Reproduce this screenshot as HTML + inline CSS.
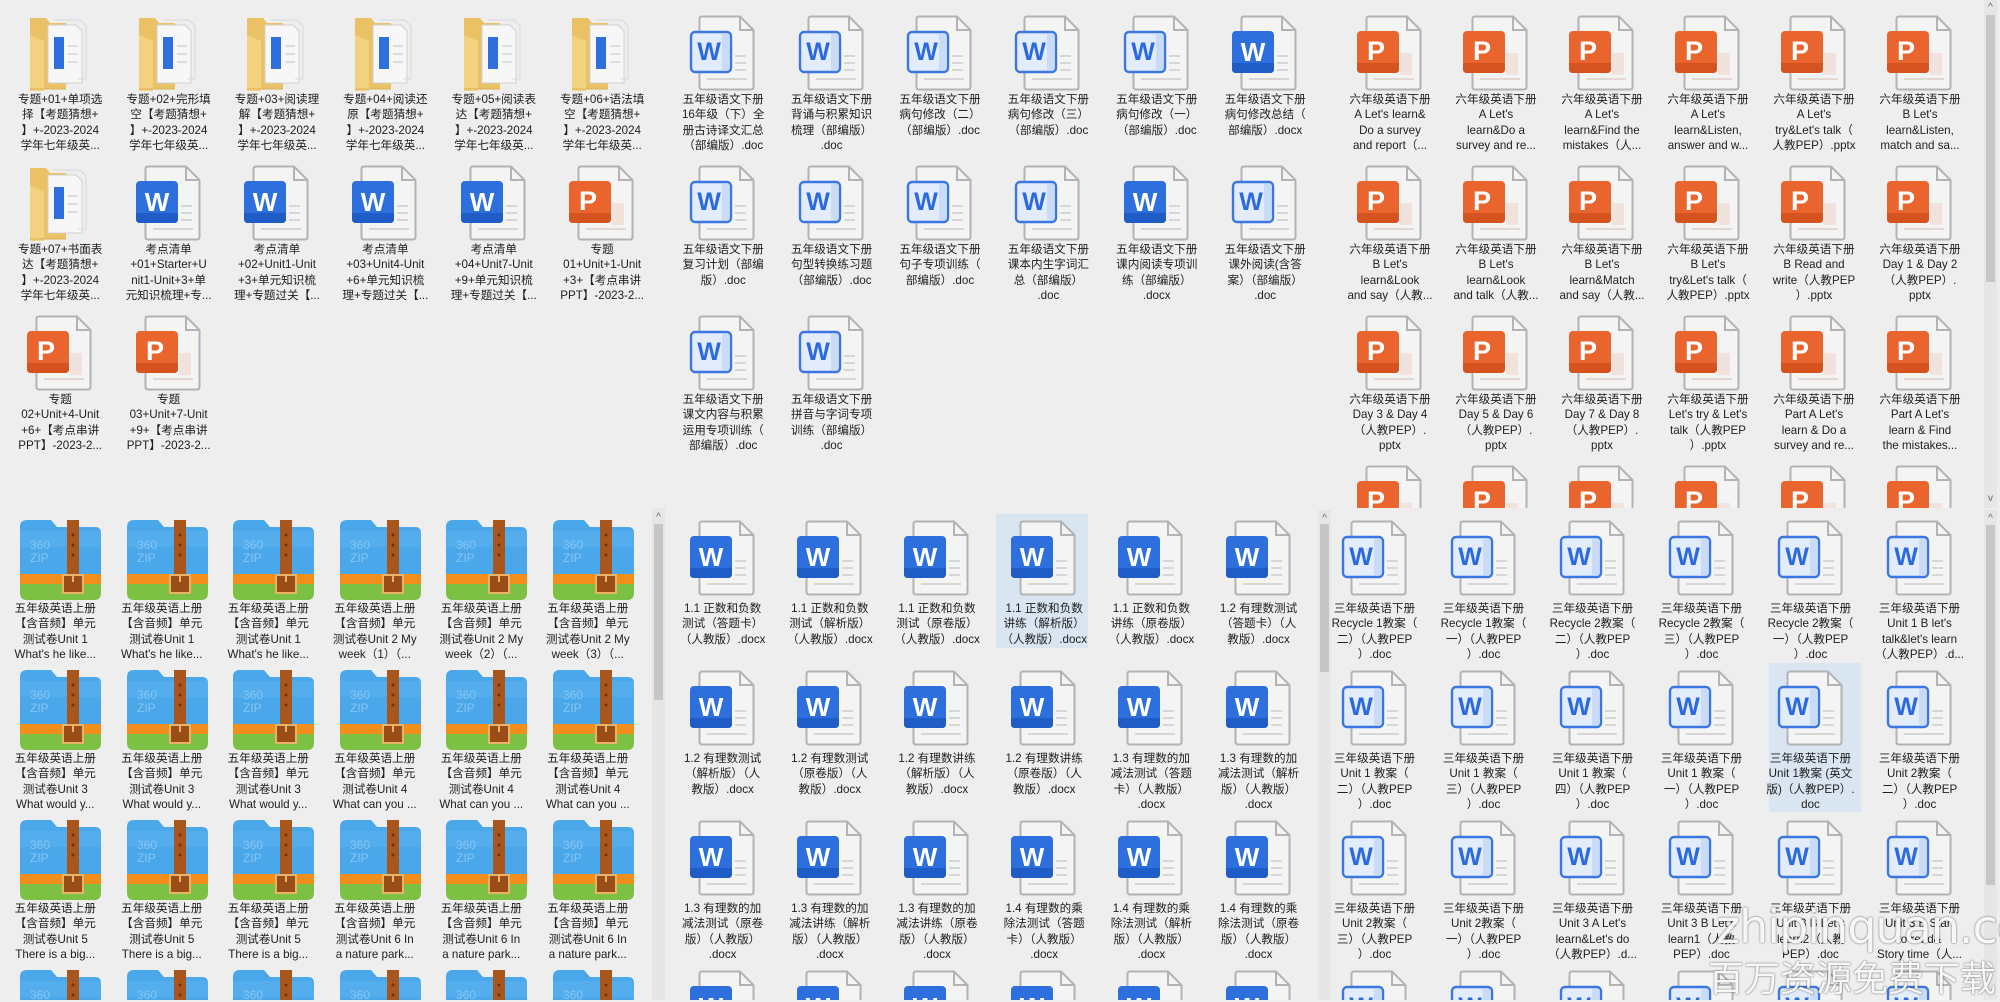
<!DOCTYPE html>
<html><head><meta charset="utf-8">
<style>
html,body{margin:0;padding:0}
body{width:2000px;height:1000px;overflow:hidden;background:#eeeeee;position:relative;font-family:"Liberation Sans","Noto Sans CJK SC",sans-serif}
.pane{position:absolute;display:flex;flex-wrap:wrap;align-content:flex-start;overflow:hidden}
.c{position:relative;height:150px;flex:none}
.i{position:absolute;top:0;left:calc(50% - 38px);width:70px;height:76px}
.z{position:absolute;top:0;left:calc(50% - 38px);width:86px;height:84px}
.t{position:absolute;left:-10px;right:-10px;text-align:center;font-size:11.6px;line-height:15.3px;color:#202020;white-space:nowrap}
.A .c,.B .c{width:108.4px}.A .t,.B .t,.C .t{top:77px}
.C .c{width:106px}
.D .c{width:106.5px}.D .t{top:84px}
.E .c{width:107.2px}.E .t{top:81px}
.F .c{width:109px}.F .t{top:81px}
.sel{position:absolute;background:#d9e5f0}
.sb{position:absolute;background:#e6e6e6;width:13px}
.th{position:absolute;left:2px;width:9px;background:#c6c6c6}
.ar{position:absolute;left:0;width:13px;text-align:center;font-size:10px;color:#666;line-height:10px}
.wm{position:absolute;color:rgba(255,255,255,.95);text-shadow:0 0 2px rgba(0,0,0,.45),0 0 1px rgba(0,0,0,.4);white-space:nowrap}
</style></head><body>
<svg width="0" height="0" style="position:absolute">
<defs>
<symbol id="pg" viewBox="0 0 70 76"><path d="M17 1.5H55L68.5 15V72Q68.5 74.5 66 74.5H17Q14.5 74.5 14.5 72V4Q14.5 1.5 17 1.5Z" fill="#f4f4f4" stroke="#b3b3b3" stroke-width="2"/><path d="M55 1.5V15H68.5" fill="none" stroke="#b3b3b3" stroke-width="2"/></symbol>
<symbol id="W" viewBox="0 0 70 76"><use href="#pg"/><rect x="50" y="40" width="11" height="2" fill="#d6d6d6"/><rect x="50" y="47" width="11" height="2" fill="#d6d6d6"/><rect x="50" y="54" width="11" height="2" fill="#d6d6d6"/><rect x="22" y="63" width="40" height="2" fill="#d6d6d6"/><rect x="5" y="16" width="42" height="42" rx="4" fill="#2d6fdc"/><path d="M5 48H47V54Q47 58 43 58H9Q5 58 5 54Z" fill="#1f5cc6"/><text x="26" y="46" text-anchor="middle" font-family="Liberation Sans" font-weight="bold" font-size="26" fill="#fff">W</text></symbol>
<symbol id="L" viewBox="0 0 70 76"><use href="#pg"/><rect x="50" y="40" width="11" height="2" fill="#d6d6d6"/><rect x="50" y="47" width="11" height="2" fill="#d6d6d6"/><rect x="50" y="54" width="11" height="2" fill="#d6d6d6"/><rect x="22" y="63" width="40" height="2" fill="#d6d6d6"/><rect x="6" y="17" width="40" height="40" rx="4" fill="#e3ecfb" stroke="#3a77e3" stroke-width="2.4"/><rect x="37" y="19" width="7" height="36" fill="#c9dbf6"/><text x="24" y="45" text-anchor="middle" font-family="Liberation Sans" font-weight="bold" font-size="25" fill="#2b6ade">W</text></symbol>
<symbol id="P" viewBox="0 0 70 76"><use href="#pg"/><rect x="48" y="38" width="12" height="22" fill="#f1e3dc"/><rect x="22" y="63" width="40" height="2" fill="#e4d6d0"/><rect x="5" y="16" width="42" height="42" rx="4" fill="#e9652d"/><path d="M5 48H47V54Q47 58 43 58H9Q5 58 5 54Z" fill="#d4531e"/><text x="24" y="45" text-anchor="middle" font-family="Liberation Sans" font-weight="bold" font-size="27" fill="#fff">P</text></symbol>
<symbol id="F" viewBox="0 0 70 76"><path d="M8 3H24L28 8H44V74H8Z" fill="#eac265"/><path d="M26 10H54L60 16V68H26Z" fill="#f7f7f7" stroke="#d0d0d0"/><path d="M32 5H58L64 11V64H56" fill="none" stroke="#d8d8d8"/><rect x="32" y="22" width="10" height="32" fill="#2d6fdc"/><rect x="46" y="30" width="10" height="2" fill="#ddd"/><rect x="46" y="38" width="10" height="2" fill="#ddd"/><rect x="46" y="46" width="10" height="2" fill="#ddd"/><path d="M8 20L22 26V76H8Z" fill="#f2d27e"/><path d="M8 74H44" stroke="#d9b056"/></symbol>
<symbol id="Z" viewBox="0 0 86 84"><path d="M3 10Q3 3 10 3H34L40 10H78Q84 10 84 16V60H3Z" fill="#4aa7ea"/><path d="M3 14H84V30H3Z" fill="#5db5f0" opacity=".5"/><rect x="3" y="57" width="81" height="12" fill="#f28e1c"/><path d="M3 67H84V76Q84 83 77 83H10Q3 83 3 76Z" fill="#7cc143"/><rect x="50" y="3" width="12" height="70" fill="#a9561c"/><circle cx="56" cy="18" r="1.5" fill="#6b3410"/><circle cx="56" cy="28" r="1.5" fill="#6b3410"/><circle cx="56" cy="38" r="1.5" fill="#6b3410"/><rect x="46" y="58" width="20" height="18" fill="#9a4d17" stroke="#e9b467" stroke-width="2"/><rect x="55" y="57" width="2" height="8" fill="#e9b467"/><text x="13" y="32" font-family="Liberation Sans" font-size="12" fill="#86c6f1">360</text><text x="13" y="45" font-family="Liberation Sans" font-size="12" fill="#86c6f1">ZIP</text></symbol>
</defs></svg>

<div class="sel" style="left:996px;top:514px;width:92px;height:134px"></div>
<div class="sel" style="left:1769px;top:663px;width:92px;height:149px"></div>

<!-- Top-left -->
<div class="pane A" style="left:6px;top:15px;width:651px;height:480px">
<div class="c"><svg class="i"><use href="#F"/></svg><div class="t">专题+01+单项选<br>择【考题猜想+<br>】+-2023-2024<br>学年七年级英...</div></div>
<div class="c"><svg class="i"><use href="#F"/></svg><div class="t">专题+02+完形填<br>空【考题猜想+<br>】+-2023-2024<br>学年七年级英...</div></div>
<div class="c"><svg class="i"><use href="#F"/></svg><div class="t">专题+03+阅读理<br>解【考题猜想+<br>】+-2023-2024<br>学年七年级英...</div></div>
<div class="c"><svg class="i"><use href="#F"/></svg><div class="t">专题+04+阅读还<br>原【考题猜想+<br>】+-2023-2024<br>学年七年级英...</div></div>
<div class="c"><svg class="i"><use href="#F"/></svg><div class="t">专题+05+阅读表<br>达【考题猜想+<br>】+-2023-2024<br>学年七年级英...</div></div>
<div class="c"><svg class="i"><use href="#F"/></svg><div class="t">专题+06+语法填<br>空【考题猜想+<br>】+-2023-2024<br>学年七年级英...</div></div>
<div class="c"><svg class="i"><use href="#F"/></svg><div class="t">专题+07+书面表<br>达【考题猜想+<br>】+-2023-2024<br>学年七年级英...</div></div>
<div class="c"><svg class="i"><use href="#W"/></svg><div class="t">考点清单<br>+01+Starter+U<br>nit1-Unit+3+单<br>元知识梳理+专...</div></div>
<div class="c"><svg class="i"><use href="#W"/></svg><div class="t">考点清单<br>+02+Unit1-Unit<br>+3+单元知识梳<br>理+专题过关【...</div></div>
<div class="c"><svg class="i"><use href="#W"/></svg><div class="t">考点清单<br>+03+Unit4-Unit<br>+6+单元知识梳<br>理+专题过关【...</div></div>
<div class="c"><svg class="i"><use href="#W"/></svg><div class="t">考点清单<br>+04+Unit7-Unit<br>+9+单元知识梳<br>理+专题过关【...</div></div>
<div class="c"><svg class="i"><use href="#P"/></svg><div class="t">专题<br>01+Unit+1-Unit<br>+3+【考点串讲<br>PPT】-2023-2...</div></div>
<div class="c"><svg class="i"><use href="#P"/></svg><div class="t">专题<br>02+Unit+4-Unit<br>+6+【考点串讲<br>PPT】-2023-2...</div></div>
<div class="c"><svg class="i"><use href="#P"/></svg><div class="t">专题<br>03+Unit+7-Unit<br>+9+【考点串讲<br>PPT】-2023-2...</div></div>
</div>

<!-- Top-middle -->
<div class="pane B" style="left:669px;top:15px;width:651px;height:480px">
<div class="c"><svg class="i"><use href="#L"/></svg><div class="t">五年级语文下册<br>16年级（下）全<br>册古诗译文汇总<br>（部编版）.doc</div></div>
<div class="c"><svg class="i"><use href="#L"/></svg><div class="t">五年级语文下册<br>背诵与积累知识<br>梳理（部编版）<br>.doc</div></div>
<div class="c"><svg class="i"><use href="#L"/></svg><div class="t">五年级语文下册<br>病句修改（二）<br>（部编版）.doc</div></div>
<div class="c"><svg class="i"><use href="#L"/></svg><div class="t">五年级语文下册<br>病句修改（三）<br>（部编版）.doc</div></div>
<div class="c"><svg class="i"><use href="#L"/></svg><div class="t">五年级语文下册<br>病句修改（一）<br>（部编版）.doc</div></div>
<div class="c"><svg class="i"><use href="#W"/></svg><div class="t">五年级语文下册<br>病句修改总结（<br>部编版）.docx</div></div>
<div class="c"><svg class="i"><use href="#L"/></svg><div class="t">五年级语文下册<br>复习计划（部编<br>版）.doc</div></div>
<div class="c"><svg class="i"><use href="#L"/></svg><div class="t">五年级语文下册<br>句型转换练习题<br>（部编版）.doc</div></div>
<div class="c"><svg class="i"><use href="#L"/></svg><div class="t">五年级语文下册<br>句子专项训练（<br>部编版）.doc</div></div>
<div class="c"><svg class="i"><use href="#L"/></svg><div class="t">五年级语文下册<br>课本内生字词汇<br>总（部编版）<br>.doc</div></div>
<div class="c"><svg class="i"><use href="#W"/></svg><div class="t">五年级语文下册<br>课内阅读专项训<br>练（部编版）<br>.docx</div></div>
<div class="c"><svg class="i"><use href="#L"/></svg><div class="t">五年级语文下册<br>课外阅读(含答<br>案）（部编版）<br>.doc</div></div>
<div class="c"><svg class="i"><use href="#L"/></svg><div class="t">五年级语文下册<br>课文内容与积累<br>运用专项训练（<br>部编版）.doc</div></div>
<div class="c"><svg class="i"><use href="#L"/></svg><div class="t">五年级语文下册<br>拼音与字词专项<br>训练（部编版）<br>.doc</div></div>
</div>

<!-- Top-right -->
<div class="pane C" style="left:1337px;top:0;padding-top:15px;width:640px;height:493px">
<div class="c"><svg class="i"><use href="#P"/></svg><div class="t">六年级英语下册<br>A Let's learn&amp;<br>Do a survey<br>and report（...</div></div>
<div class="c"><svg class="i"><use href="#P"/></svg><div class="t">六年级英语下册<br>A Let's<br>learn&amp;Do a<br>survey and re...</div></div>
<div class="c"><svg class="i"><use href="#P"/></svg><div class="t">六年级英语下册<br>A Let's<br>learn&amp;Find the<br>mistakes（人...</div></div>
<div class="c"><svg class="i"><use href="#P"/></svg><div class="t">六年级英语下册<br>A Let's<br>learn&amp;Listen,<br>answer and w...</div></div>
<div class="c"><svg class="i"><use href="#P"/></svg><div class="t">六年级英语下册<br>A Let's<br>try&amp;Let's talk（<br>人教PEP）.pptx</div></div>
<div class="c"><svg class="i"><use href="#P"/></svg><div class="t">六年级英语下册<br>B Let's<br>learn&amp;Listen,<br>match and sa...</div></div>
<div class="c"><svg class="i"><use href="#P"/></svg><div class="t">六年级英语下册<br>B Let's<br>learn&amp;Look<br>and say（人教...</div></div>
<div class="c"><svg class="i"><use href="#P"/></svg><div class="t">六年级英语下册<br>B Let's<br>learn&amp;Look<br>and talk（人教...</div></div>
<div class="c"><svg class="i"><use href="#P"/></svg><div class="t">六年级英语下册<br>B Let's<br>learn&amp;Match<br>and say（人教...</div></div>
<div class="c"><svg class="i"><use href="#P"/></svg><div class="t">六年级英语下册<br>B Let's<br>try&amp;Let's talk（<br>人教PEP）.pptx</div></div>
<div class="c"><svg class="i"><use href="#P"/></svg><div class="t">六年级英语下册<br>B Read and<br>write（人教PEP<br>）.pptx</div></div>
<div class="c"><svg class="i"><use href="#P"/></svg><div class="t">六年级英语下册<br>Day 1 &amp; Day 2<br>（人教PEP）.<br>pptx</div></div>
<div class="c"><svg class="i"><use href="#P"/></svg><div class="t">六年级英语下册<br>Day 3 &amp; Day 4<br>（人教PEP）.<br>pptx</div></div>
<div class="c"><svg class="i"><use href="#P"/></svg><div class="t">六年级英语下册<br>Day 5 &amp; Day 6<br>（人教PEP）.<br>pptx</div></div>
<div class="c"><svg class="i"><use href="#P"/></svg><div class="t">六年级英语下册<br>Day 7 &amp; Day 8<br>（人教PEP）.<br>pptx</div></div>
<div class="c"><svg class="i"><use href="#P"/></svg><div class="t">六年级英语下册<br>Let's try &amp; Let's<br>talk（人教PEP<br>）.pptx</div></div>
<div class="c"><svg class="i"><use href="#P"/></svg><div class="t">六年级英语下册<br>Part A Let's<br>learn &amp; Do a<br>survey and re...</div></div>
<div class="c"><svg class="i"><use href="#P"/></svg><div class="t">六年级英语下册<br>Part A Let's<br>learn &amp; Find<br>the mistakes...</div></div>
<div class="c"><svg class="i"><use href="#P"/></svg></div><div class="c"><svg class="i"><use href="#P"/></svg></div><div class="c"><svg class="i"><use href="#P"/></svg></div><div class="c"><svg class="i"><use href="#P"/></svg></div><div class="c"><svg class="i"><use href="#P"/></svg></div><div class="c"><svg class="i"><use href="#P"/></svg></div>
</div>

<!-- Bottom-left ZIP -->
<div class="pane D" style="left:2px;top:517px;width:648px;height:483px">
<div class="c"><svg class="z"><use href="#Z"/></svg><div class="t">五年级英语上册<br>【含音频】单元<br>测试卷Unit 1<br>What's he like...</div></div>
<div class="c"><svg class="z"><use href="#Z"/></svg><div class="t">五年级英语上册<br>【含音频】单元<br>测试卷Unit 1<br>What's he like...</div></div>
<div class="c"><svg class="z"><use href="#Z"/></svg><div class="t">五年级英语上册<br>【含音频】单元<br>测试卷Unit 1<br>What's he like...</div></div>
<div class="c"><svg class="z"><use href="#Z"/></svg><div class="t">五年级英语上册<br>【含音频】单元<br>测试卷Unit 2 My<br>week（1）（...</div></div>
<div class="c"><svg class="z"><use href="#Z"/></svg><div class="t">五年级英语上册<br>【含音频】单元<br>测试卷Unit 2 My<br>week（2）（...</div></div>
<div class="c"><svg class="z"><use href="#Z"/></svg><div class="t">五年级英语上册<br>【含音频】单元<br>测试卷Unit 2 My<br>week（3）（...</div></div>
<div class="c"><svg class="z"><use href="#Z"/></svg><div class="t">五年级英语上册<br>【含音频】单元<br>测试卷Unit 3<br>What would y...</div></div>
<div class="c"><svg class="z"><use href="#Z"/></svg><div class="t">五年级英语上册<br>【含音频】单元<br>测试卷Unit 3<br>What would y...</div></div>
<div class="c"><svg class="z"><use href="#Z"/></svg><div class="t">五年级英语上册<br>【含音频】单元<br>测试卷Unit 3<br>What would y...</div></div>
<div class="c"><svg class="z"><use href="#Z"/></svg><div class="t">五年级英语上册<br>【含音频】单元<br>测试卷Unit 4<br>What can you ...</div></div>
<div class="c"><svg class="z"><use href="#Z"/></svg><div class="t">五年级英语上册<br>【含音频】单元<br>测试卷Unit 4<br>What can you ...</div></div>
<div class="c"><svg class="z"><use href="#Z"/></svg><div class="t">五年级英语上册<br>【含音频】单元<br>测试卷Unit 4<br>What can you ...</div></div>
<div class="c"><svg class="z"><use href="#Z"/></svg><div class="t">五年级英语上册<br>【含音频】单元<br>测试卷Unit 5<br>There is a big...</div></div>
<div class="c"><svg class="z"><use href="#Z"/></svg><div class="t">五年级英语上册<br>【含音频】单元<br>测试卷Unit 5<br>There is a big...</div></div>
<div class="c"><svg class="z"><use href="#Z"/></svg><div class="t">五年级英语上册<br>【含音频】单元<br>测试卷Unit 5<br>There is a big...</div></div>
<div class="c"><svg class="z"><use href="#Z"/></svg><div class="t">五年级英语上册<br>【含音频】单元<br>测试卷Unit 6 In<br>a nature park...</div></div>
<div class="c"><svg class="z"><use href="#Z"/></svg><div class="t">五年级英语上册<br>【含音频】单元<br>测试卷Unit 6 In<br>a nature park...</div></div>
<div class="c"><svg class="z"><use href="#Z"/></svg><div class="t">五年级英语上册<br>【含音频】单元<br>测试卷Unit 6 In<br>a nature park...</div></div>
<div class="c"><svg class="z"><use href="#Z"/></svg></div><div class="c"><svg class="z"><use href="#Z"/></svg></div><div class="c"><svg class="z"><use href="#Z"/></svg></div><div class="c"><svg class="z"><use href="#Z"/></svg></div><div class="c"><svg class="z"><use href="#Z"/></svg></div><div class="c"><svg class="z"><use href="#Z"/></svg></div>
</div>

<!-- Bottom-middle -->
<div class="pane E" style="left:669px;top:520px;width:645px;height:480px">
<div class="c"><svg class="i"><use href="#W"/></svg><div class="t">1.1 正数和负数<br>测试（答题卡）<br>（人教版）.docx</div></div>
<div class="c"><svg class="i"><use href="#W"/></svg><div class="t">1.1 正数和负数<br>测试（解析版）<br>（人教版）.docx</div></div>
<div class="c"><svg class="i"><use href="#W"/></svg><div class="t">1.1 正数和负数<br>测试（原卷版）<br>（人教版）.docx</div></div>
<div class="c"><svg class="i"><use href="#W"/></svg><div class="t">1.1 正数和负数<br>讲练（解析版）<br>（人教版）.docx</div></div>
<div class="c"><svg class="i"><use href="#W"/></svg><div class="t">1.1 正数和负数<br>讲练（原卷版）<br>（人教版）.docx</div></div>
<div class="c"><svg class="i"><use href="#W"/></svg><div class="t">1.2 有理数测试<br>（答题卡）（人<br>教版）.docx</div></div>
<div class="c"><svg class="i"><use href="#W"/></svg><div class="t">1.2 有理数测试<br>（解析版）（人<br>教版）.docx</div></div>
<div class="c"><svg class="i"><use href="#W"/></svg><div class="t">1.2 有理数测试<br>（原卷版）（人<br>教版）.docx</div></div>
<div class="c"><svg class="i"><use href="#W"/></svg><div class="t">1.2 有理数讲练<br>（解析版）（人<br>教版）.docx</div></div>
<div class="c"><svg class="i"><use href="#W"/></svg><div class="t">1.2 有理数讲练<br>（原卷版）（人<br>教版）.docx</div></div>
<div class="c"><svg class="i"><use href="#W"/></svg><div class="t">1.3 有理数的加<br>减法测试（答题<br>卡）（人教版）<br>.docx</div></div>
<div class="c"><svg class="i"><use href="#W"/></svg><div class="t">1.3 有理数的加<br>减法测试（解析<br>版）（人教版）<br>.docx</div></div>
<div class="c"><svg class="i"><use href="#W"/></svg><div class="t">1.3 有理数的加<br>减法测试（原卷<br>版）（人教版）<br>.docx</div></div>
<div class="c"><svg class="i"><use href="#W"/></svg><div class="t">1.3 有理数的加<br>减法讲练（解析<br>版）（人教版）<br>.docx</div></div>
<div class="c"><svg class="i"><use href="#W"/></svg><div class="t">1.3 有理数的加<br>减法讲练（原卷<br>版）（人教版）<br>.docx</div></div>
<div class="c"><svg class="i"><use href="#W"/></svg><div class="t">1.4 有理数的乘<br>除法测试（答题<br>卡）（人教版）<br>.docx</div></div>
<div class="c"><svg class="i"><use href="#W"/></svg><div class="t">1.4 有理数的乘<br>除法测试（解析<br>版）（人教版）<br>.docx</div></div>
<div class="c"><svg class="i"><use href="#W"/></svg><div class="t">1.4 有理数的乘<br>除法测试（原卷<br>版）（人教版）<br>.docx</div></div>
<div class="c"><svg class="i"><use href="#W"/></svg></div><div class="c"><svg class="i"><use href="#W"/></svg></div><div class="c"><svg class="i"><use href="#W"/></svg></div><div class="c"><svg class="i"><use href="#W"/></svg></div><div class="c"><svg class="i"><use href="#W"/></svg></div><div class="c"><svg class="i"><use href="#W"/></svg></div>
</div>

<!-- Bottom-right -->
<div class="pane F" style="left:1320px;top:520px;width:660px;height:480px">
<div class="c"><svg class="i"><use href="#L"/></svg><div class="t">三年级英语下册<br>Recycle 1教案（<br>二）（人教PEP<br>）.doc</div></div>
<div class="c"><svg class="i"><use href="#L"/></svg><div class="t">三年级英语下册<br>Recycle 1教案（<br>一）（人教PEP<br>）.doc</div></div>
<div class="c"><svg class="i"><use href="#L"/></svg><div class="t">三年级英语下册<br>Recycle 2教案（<br>二）（人教PEP<br>）.doc</div></div>
<div class="c"><svg class="i"><use href="#L"/></svg><div class="t">三年级英语下册<br>Recycle 2教案（<br>三）（人教PEP<br>）.doc</div></div>
<div class="c"><svg class="i"><use href="#L"/></svg><div class="t">三年级英语下册<br>Recycle 2教案（<br>一）（人教PEP<br>）.doc</div></div>
<div class="c"><svg class="i"><use href="#L"/></svg><div class="t">三年级英语下册<br>Unit 1 B let's<br>talk&amp;let's learn<br>（人教PEP）.d...</div></div>
<div class="c"><svg class="i"><use href="#L"/></svg><div class="t">三年级英语下册<br>Unit 1 教案（<br>二）（人教PEP<br>）.doc</div></div>
<div class="c"><svg class="i"><use href="#L"/></svg><div class="t">三年级英语下册<br>Unit 1 教案（<br>三）（人教PEP<br>）.doc</div></div>
<div class="c"><svg class="i"><use href="#L"/></svg><div class="t">三年级英语下册<br>Unit 1 教案（<br>四）（人教PEP<br>）.doc</div></div>
<div class="c"><svg class="i"><use href="#L"/></svg><div class="t">三年级英语下册<br>Unit 1 教案（<br>一）（人教PEP<br>）.doc</div></div>
<div class="c"><svg class="i"><use href="#L"/></svg><div class="t">三年级英语下册<br>Unit 1教案 (英文<br>版)（人教PEP）.<br>doc</div></div>
<div class="c"><svg class="i"><use href="#L"/></svg><div class="t">三年级英语下册<br>Unit 2教案（<br>二）（人教PEP<br>）.doc</div></div>
<div class="c"><svg class="i"><use href="#L"/></svg><div class="t">三年级英语下册<br>Unit 2教案（<br>三）（人教PEP<br>）.doc</div></div>
<div class="c"><svg class="i"><use href="#L"/></svg><div class="t">三年级英语下册<br>Unit 2教案（<br>一）（人教PEP<br>）.doc</div></div>
<div class="c"><svg class="i"><use href="#L"/></svg><div class="t">三年级英语下册<br>Unit 3 A Let's<br>learn&amp;Let's do<br>（人教PEP）.d...</div></div>
<div class="c"><svg class="i"><use href="#L"/></svg><div class="t">三年级英语下册<br>Unit 3 B Let's<br>learn1（人教<br>PEP）.doc</div></div>
<div class="c"><svg class="i"><use href="#L"/></svg><div class="t">三年级英语下册<br>Unit 3 B Let's<br>learn2（人教<br>PEP）.doc</div></div>
<div class="c"><svg class="i"><use href="#L"/></svg><div class="t">三年级英语下册<br>Unit 3 B Start<br>to read&amp;<br>Story time（人...</div></div>
<div class="c"><svg class="i"><use href="#L"/></svg></div><div class="c"><svg class="i"><use href="#L"/></svg></div><div class="c"><svg class="i"><use href="#L"/></svg></div><div class="c"><svg class="i"><use href="#L"/></svg></div><div class="c"><svg class="i"><use href="#L"/></svg></div><div class="c"><svg class="i"><use href="#L"/></svg></div>
</div>

<!-- scrollbars -->
<div class="sb" style="left:1984px;top:0;height:508px"><div class="ar" style="top:3px">^</div><div class="th" style="top:15px;height:267px"></div><div class="ar" style="top:494px">v</div></div>
<div class="sb" style="left:1984px;top:510px;height:490px"><div class="ar" style="top:4px">^</div><div class="th" style="top:15px;height:360px"></div></div>
<div class="sb" style="left:652px;top:508px;height:492px"><div class="ar" style="top:5px">^</div><div class="th" style="top:16px;height:176px"></div></div>
<div class="sb" style="left:1318px;top:510px;height:490px"><div class="ar" style="top:4px">^</div><div class="th" style="top:14px;height:148px"></div></div>

<div class="wm" style="left:1716px;top:900px;font-size:46px;font-family:'DejaVu Sans','Liberation Sans',sans-serif;letter-spacing:-1px">zhipinquan.com</div>
<div class="wm" style="left:1708px;top:950px;font-size:36px;font-family:'Noto Sans CJK SC',sans-serif">百万资源免费下载</div>
</body></html>
